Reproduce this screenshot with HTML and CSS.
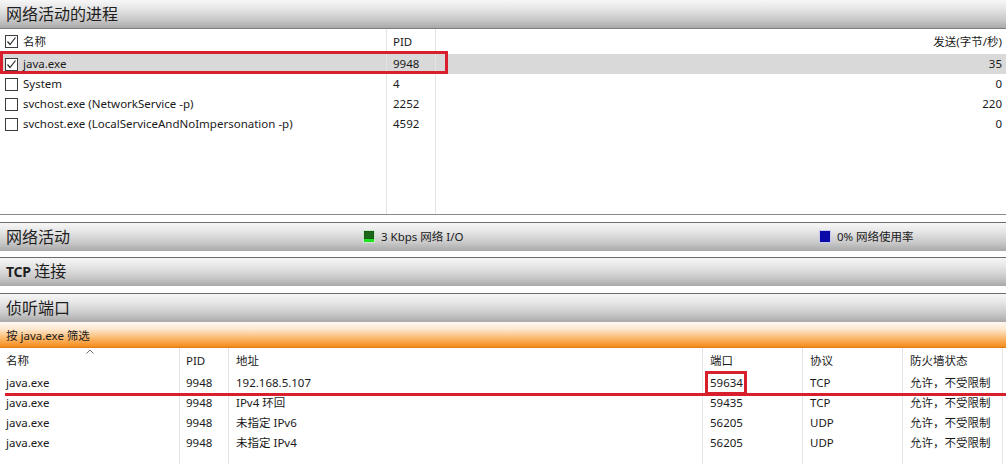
FILE: index.html
```html
<!DOCTYPE html>
<html lang="zh-CN">
<head>
<meta charset="utf-8">
<title>资源监视器 - 网络</title>
<link rel="stylesheet" href="styles.css">
</head>
<body>
<div class="app">
  <div class="panel-title top-title">网络活动的进程</div>

  <div class="proc-list">
    <div class="prow phead">
      <div class="cell c-name"><svg class="cb" viewBox="0 0 13 13"><rect x="0.5" y="0.5" width="12" height="12"/><polyline points="2.5,6.5 5,9.5 10.5,2.5"/></svg>名称</div>
      <div class="cell c-pid">PID</div>
      <div class="cell c-send">发送(字节/秒)</div>
    </div>
    <div class="prow selected">
      <div class="cell c-name"><svg class="cb" viewBox="0 0 13 13"><rect x="0.5" y="0.5" width="12" height="12"/><polyline points="2.5,6.5 5,9.5 10.5,2.5"/></svg>java.exe</div>
      <div class="cell c-pid">9948</div>
      <div class="cell c-send">35</div>
    </div>
    <div class="prow">
      <div class="cell c-name"><svg class="cb" viewBox="0 0 13 13"><rect x="0.5" y="0.5" width="12" height="12"/></svg>System</div>
      <div class="cell c-pid">4</div>
      <div class="cell c-send">0</div>
    </div>
    <div class="prow">
      <div class="cell c-name"><svg class="cb" viewBox="0 0 13 13"><rect x="0.5" y="0.5" width="12" height="12"/></svg>svchost.exe (NetworkService -p)</div>
      <div class="cell c-pid">2252</div>
      <div class="cell c-send">220</div>
    </div>
    <div class="prow">
      <div class="cell c-name"><svg class="cb" viewBox="0 0 13 13"><rect x="0.5" y="0.5" width="12" height="12"/></svg>svchost.exe (LocalServiceAndNoImpersonation -p)</div>
      <div class="cell c-pid">4592</div>
      <div class="cell c-send">0</div>
    </div>
    <div class="prow filler">
      <div class="cell c-name"></div>
      <div class="cell c-pid"></div>
      <div class="cell c-send"></div>
    </div>
  </div>

  <div class="panel-title section first">
    <span class="sec-label wide">网络活动</span>
    <span class="indicator io">
      <svg class="ind-icon" viewBox="0 0 12 13">
        <rect x="0" y="0" width="12" height="13" fill="#c9e8c9"/>
        <rect x="1" y="1" width="10" height="8" fill="#0d4d0d"/>
        <path d="M1 3h10M1 5h10M1 7h10M3 1v8M5 1v8M7 1v8M9 1v8" stroke="#2a7a2a" stroke-width="0.7"/>
        <rect x="1" y="9" width="10" height="3" fill="#22e022"/>
      </svg>3 Kbps 网络 I/O
    </span>
    <span class="indicator usage">
      <svg class="ind-icon" viewBox="0 0 12 13">
        <rect x="0" y="0" width="12" height="13" fill="#c8c8ee"/>
        <rect x="1" y="1" width="10" height="11" fill="#0a0aa8"/>
      </svg>0% 网络使用率
    </span>
  </div>

  <div class="panel-title section">
    <span class="sec-label"><b class="tcp">TCP</b> 连接</span>
  </div>

  <div class="panel-title section third">
    <span class="sec-label">侦听端口</span>
  </div>

  <div class="filter-bar">按 java.exe 筛选</div>

  <div class="port-list">
    <div class="trow thead">
      <div class="tc t-name">名称<svg class="sort" viewBox="0 0 8 5"><polyline points="0.5,4.5 4,1 7.5,4.5"/></svg></div>
      <div class="tc t-pid">PID</div>
      <div class="tc t-addr">地址</div>
      <div class="tc t-port">端口</div>
      <div class="tc t-proto">协议</div>
      <div class="tc t-fw">防火墙状态</div>
      <div class="tc t-rest"></div>
    </div>
    <div class="trow">
      <div class="tc t-name">java.exe</div>
      <div class="tc t-pid">9948</div>
      <div class="tc t-addr">192.168.5.107</div>
      <div class="tc t-port">59634</div>
      <div class="tc t-proto">TCP</div>
      <div class="tc t-fw">允许，不受限制</div>
      <div class="tc t-rest"></div>
    </div>
    <div class="trow">
      <div class="tc t-name">java.exe</div>
      <div class="tc t-pid">9948</div>
      <div class="tc t-addr">IPv4 环回</div>
      <div class="tc t-port">59435</div>
      <div class="tc t-proto">TCP</div>
      <div class="tc t-fw">允许，不受限制</div>
      <div class="tc t-rest"></div>
    </div>
    <div class="trow">
      <div class="tc t-name">java.exe</div>
      <div class="tc t-pid">9948</div>
      <div class="tc t-addr">未指定 IPv6</div>
      <div class="tc t-port">56205</div>
      <div class="tc t-proto">UDP</div>
      <div class="tc t-fw">允许，不受限制</div>
      <div class="tc t-rest"></div>
    </div>
    <div class="trow">
      <div class="tc t-name">java.exe</div>
      <div class="tc t-pid">9948</div>
      <div class="tc t-addr">未指定 IPv4</div>
      <div class="tc t-port">56205</div>
      <div class="tc t-proto">UDP</div>
      <div class="tc t-fw">允许，不受限制</div>
      <div class="tc t-rest"></div>
    </div>
    <div class="trow filler">
      <div class="tc t-name"></div>
      <div class="tc t-pid"></div>
      <div class="tc t-addr"></div>
      <div class="tc t-port"></div>
      <div class="tc t-proto"></div>
      <div class="tc t-fw"></div>
      <div class="tc t-rest"></div>
    </div>
  </div>

  <div class="mark mark-proc"></div>
  <div class="mark mark-port"></div>
  <div class="mark-line"></div>
</div>
</body>
</html>
```

FILE: styles.css
```css
* { box-sizing: border-box; }

html, body {
  margin: 0;
  padding: 0;
  background: #ffffff;
}

body {
  font-family: "Noto Sans", "Noto Sans CJK SC", sans-serif;
  font-size: 11.5px;
  color: #1a1a1a;
}

.app {
  position: relative;
  width: 1006px;
  height: 464px;
  overflow: hidden;
  display: flex;
  flex-direction: column;
}

/* ---------- section headers ---------- */
.panel-title {
  display: flex;
  align-items: center;
  font-family: "Noto Sans CJK SC", sans-serif;
  font-size: 16px;
  color: #1e1e1e;
  padding-left: 6px;
  background: linear-gradient(#f7f7f7 0%, #e6e6e6 30%, #c9c9c9 70%, #a9a9a9 100%);
  flex: none;
}

.top-title {
  height: 29px;
  border-bottom: 1px solid #7e7e7e;
  padding-bottom: 2px;
}

.section {
  height: 29px;
  border-top: 1px solid #6c6c6c;
  margin-top: 6px;
  padding-bottom: 3px;
}

.section.first { margin-top: 7px; }
.section.third { margin-top: 7px; }

.sec-label { line-height: 1; }
.sec-label.wide { width: 357px; flex: none; }

.tcp {
  font-family: "Noto Sans", sans-serif;
  font-weight: 700;
  font-size: 14px;
  letter-spacing: -0.3px;
}

.indicator {
  display: flex;
  align-items: center;
  font-family: "Noto Sans", "Noto Sans CJK SC", sans-serif;
  font-size: 11.5px;
  color: #1a1a1a;
  margin-top: 1px;
}

.indicator.io { width: 456px; flex: none; }

.ind-icon {
  width: 12px;
  height: 13px;
  margin-right: 6px;
  flex: none;
}

/* ---------- process list ---------- */
.proc-list {
  height: 186px;
  display: flex;
  flex-direction: column;
  border-bottom: 1px solid #8a8a8a;
  flex: none;
}

.prow {
  display: grid;
  grid-template-columns: 387px 49px 1fr;
  height: 20px;
  line-height: 20px;
  flex: none;
}

.prow.phead {
  height: 25px;
  line-height: 25px;
}

.prow.selected { background: #d9d9d9; }

.prow.filler { flex: 1; }

.cell {
  white-space: nowrap;
  overflow: hidden;
}

.c-name {
  display: flex;
  align-items: center;
  padding-left: 5px;
  border-right: 1px solid #e4e4e4;
}

.c-pid {
  padding-left: 6px;
  border-right: 1px solid #e4e4e4;
}

.c-send {
  text-align: right;
  padding-right: 4px;
}

.cb {
  width: 13px;
  height: 13px;
  margin-right: 5px;
  flex: none;
}

.cb rect {
  fill: #ffffff;
  stroke: #3c3c3c;
  stroke-width: 1;
}

.cb polyline {
  fill: none;
  stroke: #2a2a2a;
  stroke-width: 1.2;
}

/* ---------- filter bar ---------- */
.filter-bar {
  height: 26px;
  flex: none;
  display: flex;
  align-items: center;
  padding-left: 6px;
  color: #1a1a1a;
  background: linear-gradient(#fffaf4 0%, #fde6cc 30%, #fab15e 70%, #f48b1c 100%);
  border-bottom: 1px solid #e07f14;
}

/* ---------- port list ---------- */
.port-list {
  flex: 1;
  display: flex;
  flex-direction: column;
}

.trow {
  display: grid;
  grid-template-columns: 180px 49px 474px 100px 100px 100px 1fr;
  height: 20px;
  line-height: 20px;
  flex: none;
}

.trow.thead {
  height: 25px;
  line-height: 25px;
}

.trow.filler { flex: 1; }

.tc {
  white-space: nowrap;
  overflow: hidden;
  padding-left: 6px;
  border-right: 1px solid #e4e4e4;
}

.tc.t-addr, .tc.t-port, .tc.t-proto, .tc.t-fw { padding-left: 7px; }

.tc.t-rest { border-right: none; }

.t-name { position: relative; }

.sort {
  position: absolute;
  left: 86px;
  top: 1px;
  width: 8px;
  height: 5px;
}

.sort polyline {
  fill: none;
  stroke: #6a6a6a;
  stroke-width: 1;
}

/* ---------- annotations ---------- */
.mark {
  position: absolute;
  border: 3px solid #d8202c;
}

.mark-proc {
  left: 0;
  top: 51px;
  width: 448px;
  height: 23px;
}

.mark-port {
  left: 705px;
  top: 371px;
  width: 42px;
  height: 24px;
}

.mark-line {
  position: absolute;
  left: 5px;
  top: 393px;
  width: 1001px;
  height: 3px;
  background: #d8202c;
}
```
